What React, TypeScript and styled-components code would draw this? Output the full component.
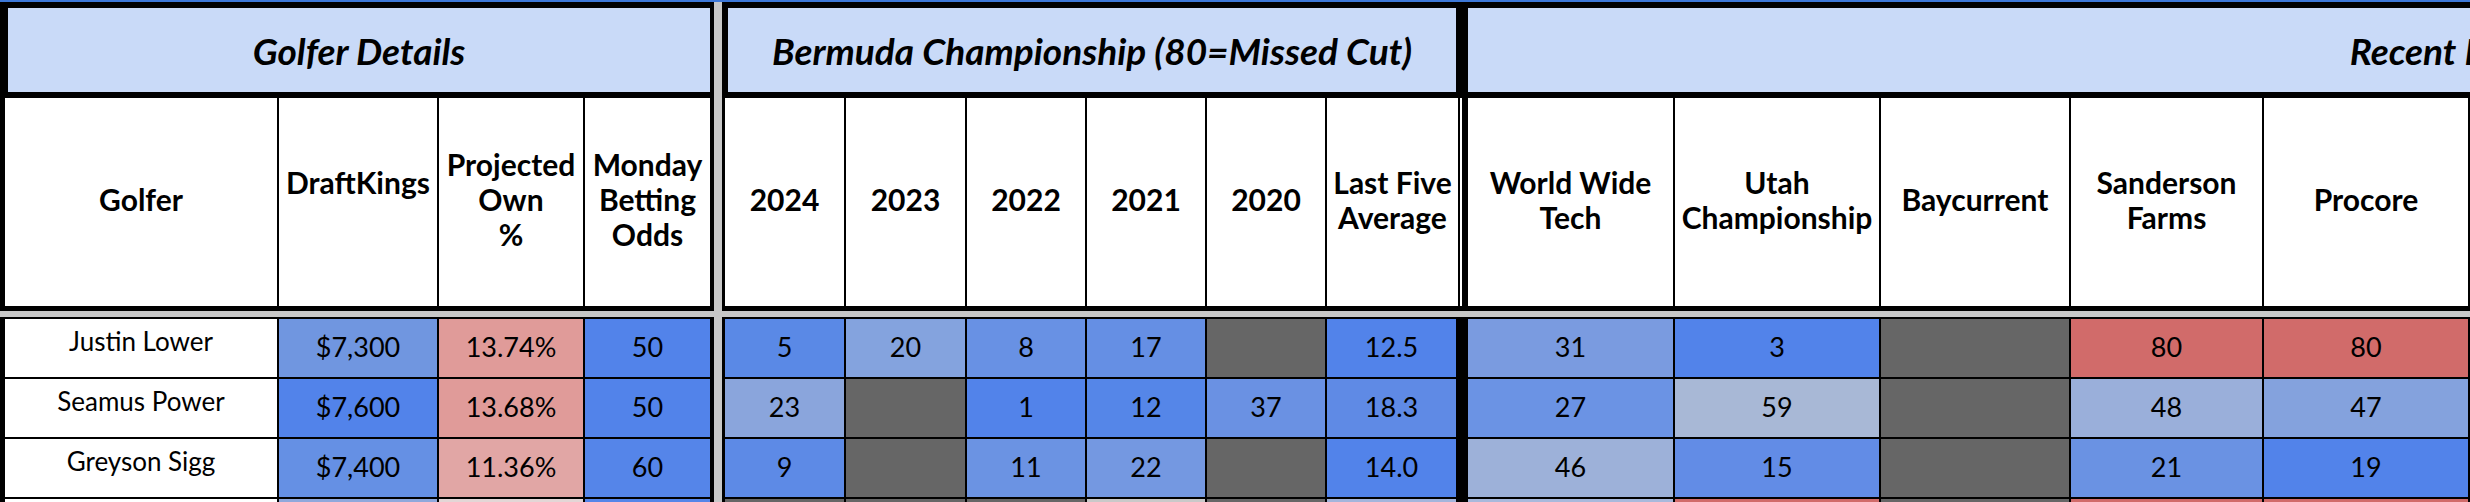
import React from 'react'
import styled, { createGlobalStyle } from 'styled-components'

const INK = '#000000'
const FREEZE = '#c7c7c7'
const EMPTY = '#666666'

const GlobalStyle = createGlobalStyle`
  html,
  body {
    margin: 0;
    padding: 0;
    background: #ffffff;
    overflow: hidden;
  }

  body {
    font-family: Lato, 'Liberation Sans', sans-serif;
    color: #000000;
  }
`

type Column = {
  label: string
  width: number
  rule?: number
  headRule?: number
  headGap?: number
}

type Cell = [string, string]

type Row = {
  golfer: string
  details: Cell[]
  bermuda: Cell[]
  recent: Cell[]
}

const golferColumns: Column[] = [
  { label: 'Golfer', width: 274 },
  { label: 'DraftKings\n\u00a0', width: 160 },
  { label: 'Projected\nOwn\n%', width: 146 },
  { label: 'Monday\nBetting\nOdds', width: 129, rule: 4 }
]

const bermudaColumns: Column[] = [
  { label: '2024', width: 121 },
  { label: '2023', width: 121 },
  { label: '2022', width: 120 },
  { label: '2021', width: 120 },
  { label: '2020', width: 120 },
  { label: 'Last Five\nAverage', width: 135, rule: 6, headRule: 2, headGap: 2 }
]

const recentColumns: Column[] = [
  { label: 'World Wide\nTech', width: 207 },
  { label: 'Utah\nChampionship', width: 206 },
  { label: 'Baycurrent', width: 190 },
  { label: 'Sanderson\nFarms', width: 193 },
  { label: 'Procore', width: 206 }
]

const rows: Row[] = [
  {
    golfer: 'Justin Lower',
    details: [['$7,300', '#7096e0'], ['13.74%', '#e09b99'], ['50', '#5283ea']],
    bermuda: [['5', '#5a89e6'], ['20', '#84a3de'], ['8', '#6891e4'], ['17', '#658fe4'], ['', EMPTY], ['12.5', '#5283ea']],
    recent: [['31', '#7a9be0'], ['3', '#5283ea'], ['', EMPTY], ['80', '#d16b6a'], ['80', '#d16b6a']]
  },
  {
    golfer: 'Seamus Power',
    details: [['$7,600', '#5283ea'], ['13.68%', '#e09b99'], ['50', '#5283ea']],
    bermuda: [['23', '#8aa5dc'], ['', EMPTY], ['1', '#5283ea'], ['12', '#5586e8'], ['37', '#6a91e3'], ['18.3', '#5f8ae5']],
    recent: [['27', '#6b93e4'], ['59', '#a8b8d6'], ['', EMPTY], ['48', '#9aafda'], ['47', '#84a2dd']]
  },
  {
    golfer: 'Greyson Sigg',
    details: [['$7,400', '#6590e4'], ['11.36%', '#e1a6a5'], ['60', '#5585e9']],
    bermuda: [['9', '#5d8ae6'], ['', EMPTY], ['11', '#6b93e3'], ['22', '#7498e1'], ['', EMPTY], ['14.0', '#5283ea']],
    recent: [['46', '#9db1d9'], ['15', '#628ce6'], ['', EMPTY], ['21', '#6a92e3'], ['19', '#5283ea']]
  },
  {
    golfer: '',
    details: [['', '#8fa8dc'], ['', '#e3d6d6'], ['', '#5585e9']],
    bermuda: [['', EMPTY], ['', EMPTY], ['', EMPTY], ['', '#c9c9c9'], ['', EMPTY], ['', '#a3b5dc']],
    recent: [['', '#a8b9dc'], ['', '#d16b6a'], ['', EMPTY], ['', '#d16b6a'], ['', '#d16b6a']]
  }
]

const Sheet = styled.div`
  width: 2470px;
  height: 502px;
  overflow: hidden;
  display: flex;
  flex-direction: column;
`

const TopStrip = styled.div`
  flex: none;
  height: 2px;
  background: #3d78d8;
`

const Panes = styled.div`
  display: flex;
  align-items: stretch;
`

const FreezeColumn = styled.div`
  flex: none;
  width: 8px;
  background: ${FREEZE};
`

const Group = styled.div<{ $width: number }>`
  flex: none;
  width: ${(p) => p.$width}px;
  display: flex;
  flex-direction: column;
  background: #ffffff;
`

const Title = styled.div<{ $left: number; $right: number }>`
  box-sizing: border-box;
  height: 96px;
  border-top: 6px solid ${INK};
  border-bottom: 6px solid ${INK};
  border-left: ${(p) => p.$left}px solid ${INK};
  border-right: ${(p) => p.$right}px solid ${INK};
  background: #c9daf8;
  display: flex;
  align-items: center;
  justify-content: center;
  font-size: 37px;
  font-weight: 700;
  font-style: italic;
  white-space: nowrap;
`

const LabelRow = styled.div<{ $lead: number }>`
  box-sizing: border-box;
  display: flex;
  height: 213px;
  border-left: ${(p) => p.$lead}px solid ${INK};
  border-bottom: 5px solid ${INK};
`

const LabelCell = styled.div<{ $width: number; $rule: number; $gap: number }>`
  box-sizing: border-box;
  flex: none;
  width: ${(p) => p.$width}px;
  margin-right: ${(p) => p.$gap}px;
  border-right: ${(p) => p.$rule}px solid ${INK};
  padding-bottom: 5px;
  display: flex;
  align-items: center;
  justify-content: center;
  text-align: center;
  white-space: pre-line;
  font-size: 30px;
  font-weight: 700;
  line-height: 35px;
`

const FreezeRow = styled.div`
  flex: none;
  height: 6px;
  background: ${FREEZE};
`

const DataBlock = styled.div<{ $lead: number }>`
  border-top: 2px solid ${INK};
  border-left: ${(p) => p.$lead}px solid ${INK};
`

const DataRow = styled.div`
  box-sizing: border-box;
  display: flex;
  height: 60px;
  border-bottom: 2px solid ${INK};
`

const DataCell = styled.div<{ $width: number; $rule: number; $fill: string }>`
  box-sizing: border-box;
  flex: none;
  width: ${(p) => p.$width}px;
  border-right: ${(p) => p.$rule}px solid ${INK};
  background: ${(p) => p.$fill};
  padding-bottom: 3px;
  display: flex;
  align-items: center;
  justify-content: center;
  font-size: 27px;
  white-space: nowrap;
`

const NameCell = styled(DataCell)`
  padding-bottom: 14px;
  font-size: 26px;
`

const Labels = ({ columns, lead }: { columns: Column[]; lead: number }) => (
  <LabelRow $lead={lead}>
    {columns.map((c) => (
      <LabelCell
        key={c.label}
        $width={c.width - (c.headGap ?? 0)}
        $rule={c.headRule ?? c.rule ?? 2}
        $gap={c.headGap ?? 0}
      >
        {c.label}
      </LabelCell>
    ))}
  </LabelRow>
)

const Cells = ({ columns, cells }: { columns: Column[]; cells: Cell[] }) => (
  <>
    {cells.map(([value, fill], i) => (
      <DataCell key={i} $width={columns[i].width} $rule={columns[i].rule ?? 2} $fill={fill}>
        {value}
      </DataCell>
    ))}
  </>
)

const App = () => (
  <>
    <GlobalStyle />
    <Sheet>
      <TopStrip />
      <Panes>
        <Group $width={714}>
          <Title $left={8} $right={4}>Golfer Details</Title>
          <Labels columns={golferColumns} lead={5} />
          <FreezeRow />
          <DataBlock $lead={5}>
            {rows.map((r, i) => (
              <DataRow key={i}>
                <NameCell $width={golferColumns[0].width} $rule={2} $fill="#ffffff">
                  {r.golfer}
                </NameCell>
                <Cells columns={golferColumns.slice(1)} cells={r.details} />
              </DataRow>
            ))}
          </DataBlock>
        </Group>

        <FreezeColumn />

        <Group $width={740}>
          <Title $left={6} $right={6}>Bermuda Championship (80=Missed Cut)</Title>
          <Labels columns={bermudaColumns} lead={3} />
          <FreezeRow />
          <DataBlock $lead={3}>
            {rows.map((r, i) => (
              <DataRow key={i}>
                <Cells columns={bermudaColumns} cells={r.bermuda} />
              </DataRow>
            ))}
          </DataBlock>
        </Group>

        <Group $width={1964}>
          <Title $left={6} $right={0}>Recent Form</Title>
          <Labels columns={recentColumns} lead={6} />
          <FreezeRow />
          <DataBlock $lead={6}>
            {rows.map((r, i) => (
              <DataRow key={i}>
                <Cells columns={recentColumns} cells={r.recent} />
              </DataRow>
            ))}
          </DataBlock>
        </Group>
      </Panes>
    </Sheet>
  </>
)

export default App
